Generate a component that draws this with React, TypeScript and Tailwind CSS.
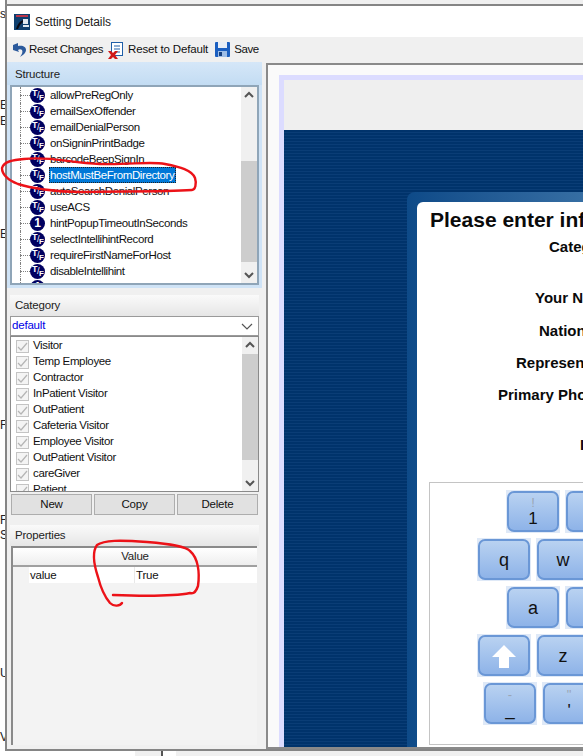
const font = { fontFamily: '"Liberation Sans", Arial, sans-serif' };

const treeRows: { name: string; kind: "bool" | "num"; selected?: boolean }[] = [
  { name: "allowPreRegOnly", kind: "bool" },
  { name: "emailSexOffender", kind: "bool" },
  { name: "emailDenialPerson", kind: "bool" },
  { name: "onSigninPrintBadge", kind: "bool" },
  { name: "barcodeBeepSignIn", kind: "bool" },
  { name: "hostMustBeFromDirectory", kind: "bool", selected: true },
  { name: "autoSearchDenialPerson", kind: "bool" },
  { name: "useACS", kind: "bool" },
  { name: "hintPopupTimeoutInSeconds", kind: "num" },
  { name: "selectIntellihintRecord", kind: "bool" },
  { name: "requireFirstNameForHost", kind: "bool" },
  { name: "disableIntellihint", kind: "bool" },
  { name: "useHintRecord", kind: "num" },
];

const categories = [
  "Visitor",
  "Temp Employee",
  "Contractor",
  "InPatient Visitor",
  "OutPatient",
  "Cafeteria Visitor",
  "Employee Visitor",
  "OutPatient Visitor",
  "careGiver",
  "Patient",
];

function NodeIcon({ kind }: { kind: "bool" | "num" }) {
  return (
    <span className="relative block h-[15px] w-[15px] shrink-0 rounded-full bg-[#000060] tracking-normal text-white">
      {kind === "bool" ? (
        <>
          <span className="absolute left-[2px] top-[0px] text-[9px] font-bold leading-[10px]">T</span>
          <span className="absolute left-[7px] top-[2px] text-[9px] leading-[10px]">/</span>
          <span className="absolute left-[9px] top-[5px] text-[8px] font-bold leading-[10px]">F</span>
        </>
      ) : (
        <span className="absolute inset-0 text-center text-[12px] font-bold leading-[15px]">1</span>
      )}
    </span>
  );
}

function TreeRow({ name, kind, selected }: { name: string; kind: "bool" | "num"; selected?: boolean }) {
  return (
    <div className="relative flex h-4 shrink-0 items-center pl-[8px]">
      <span className="absolute bottom-0 left-[8px] top-0 border-l border-dotted border-[#808080]" />
      <span className="w-[10px] shrink-0 border-t border-dotted border-[#808080]" />
      <NodeIcon kind={kind} />
      <span
        className={
          selected
            ? "ml-[4px] whitespace-nowrap border border-dotted border-[#222] bg-[#0078d7] pr-[1px] text-[11.5px] leading-[14px] tracking-[-0.4px] text-white"
            : "ml-[5px] whitespace-nowrap text-[11.5px] leading-[14px] tracking-[-0.4px] text-[#111]"
        }
      >
        {name}
      </span>
    </div>
  );
}

function ScrollBar({ thumbTop, thumbHeight }: { thumbTop: string; thumbHeight: string }) {
  return (
    <div className="flex w-[16px] shrink-0 flex-col items-center bg-[#f0f0f0]">
      <svg width="16" height="16" viewBox="0 0 16 16" className="shrink-0">
        <path d="M4 10 L8 6 L12 10" fill="none" stroke="#555" strokeWidth="2" />
      </svg>
      <div className={`w-full flex-1 ${thumbTop}`}>
        <div className={`w-full bg-[#cdcdcd] ${thumbHeight}`} />
      </div>
      <svg width="16" height="16" viewBox="0 0 16 16" className="shrink-0">
        <path d="M4 6 L8 10 L12 6" fill="none" stroke="#555" strokeWidth="2" />
      </svg>
    </div>
  );
}

function Key({ top, label, wide }: { top?: string; label?: string; wide?: boolean }) {
  return (
    <div className="h-[43px] w-[54px] shrink-0 bg-[#dfe9f7] p-px">
      <div className="relative flex h-full w-full flex-col items-center justify-center rounded-[7px] border-2 border-[#6a97d6] bg-gradient-to-b from-[#b9d2f1] to-[#8eb3e8] text-[#111]">
        {wide ? (
          <svg width="24" height="24" viewBox="0 0 24 24">
            <path d="M12 1 L24 13 H17 V24 H7 V13 H0 Z" fill="#fff" />
          </svg>
        ) : top !== undefined ? (
          <>
            <span className="text-[13px] leading-[15px] text-[#9aa6b5]">{top}</span>
            <span className="text-[17px] leading-[18px]">{label}</span>
          </>
        ) : (
          <span className="text-[18px] leading-[18px]">{label}</span>
        )}
      </div>
    </div>
  );
}

function PanelHeader({ title, blue }: { title: string; blue?: boolean }) {
  return (
    <div
      className={
        blue
          ? "flex h-[23px] shrink-0 items-center bg-gradient-to-b from-[#d5e7f8] to-[#c3dcf3] pl-[8px] pt-[2px] text-[11.5px] tracking-[-0.2px] text-[#222]"
          : "flex h-[21px] shrink-0 items-center bg-gradient-to-b from-[#fafafa] to-[#e6e6e6] pl-[5px] text-[11.5px] tracking-[-0.2px] text-[#222]"
      }
    >
      {title}
    </div>
  );
}

export default function App() {
  return (
    <div style={font} className="flex h-[756px] w-[583px] flex-col overflow-hidden bg-white">
      <div className="flex h-[751px] shrink-0">
        {/* what shows of the window behind */}
        <div className="flex w-[5px] shrink-0 flex-col overflow-hidden whitespace-nowrap text-[12px] leading-[14px] text-[#222]">
          <span className="mt-[7px]">s</span>
          <span className="mt-[77px]">E</span>
          <span className="mt-[2px]">E</span>
          <span className="mt-[99px]">E</span>
          <span className="mt-[177px]">F</span>
          <span className="mt-[81px]">F</span>
          <span className="mt-[1px]">S</span>
          <span className="mt-[124px]">U</span>
          <span className="mt-[50px]">V</span>
        </div>

        <div className="flex min-w-0 flex-1 flex-col border-b-2 border-l-2 border-[#858585] bg-[#f0f0f0]">
          <div className="mt-[4px] h-[2px] shrink-0 bg-[#858585]" />
          {/* title bar */}
          <div className="flex h-[31px] shrink-0 items-center gap-[5px] bg-white pl-[7px]">
            <svg width="16" height="16" viewBox="0 0 16 16" className="shrink-0">
              <rect width="16" height="16" fill="#0f3f6e" />
              <rect x="2" y="1" width="12" height="2" fill="#b8344a" />
              <rect x="9" y="5" width="5" height="5" fill="#dfe7ef" />
              <path d="M2 15 Q4 8 9 6 L9 8 Q6 10 4 15 Z" fill="#0a0a14" />
              <rect x="9" y="11" width="6" height="2" fill="#dfe7ef" />
            </svg>
            <span className="text-[12px] tracking-[-0.1px] text-[#222]">Setting Details</span>
          </div>

          {/* toolbar */}
          <div className="flex h-[25px] shrink-0 items-center pl-[5px] text-[11.5px] tracking-[-0.4px] text-[#111]">
            <svg width="15" height="15" viewBox="0 0 15 15" className="shrink-0">
              <path d="M1 3 L6 1 L6 4 C11 3 14 5 14 8 C14 11 11 13 8 15 C10 12 11 10 10 8 C9 7 7 7 6 8 L7 10 L1 8 Z" fill="#2c5a9c" />
            </svg>
            <span className="ml-[2px]">Reset Changes</span>
            <svg width="16" height="18" viewBox="0 0 16 18" className="ml-[5px] shrink-0">
              <rect x="3.5" y="1.5" width="11" height="13" fill="#fff" stroke="#1f5fa8" />
              <path d="M6 5 H12 M6 8 H12 M8 11 H12" stroke="#1f5fa8" />
              <path d="M0 10 L3 10 L5 12 L7 10 L10 10 L7 14 L10 18 L7 18 L5 16 L3 18 L0 18 L3 14 Z" fill="#d01818" />
            </svg>
            <span className="ml-[4px] tracking-[-0.15px]">Reset to Default</span>
            <svg width="15" height="15" viewBox="0 0 15 15" className="ml-[7px] shrink-0">
              <rect width="15" height="15" rx="1" fill="#1b5fc0" />
              <rect x="3" y="0" width="9" height="6" fill="#e8eef6" />
              <rect x="3" y="9" width="9" height="6" fill="#9dbde6" />
              <rect x="4" y="10" width="3" height="4" fill="#153f80" />
            </svg>
            <span className="ml-[4px]">Save</span>
          </div>

          {/* body */}
          <div className="flex min-h-0 flex-1">
            <div className="flex w-[255px] shrink-0 flex-col">
              <div className="flex flex-col bg-[#cfe3f6]">
                <PanelHeader title="Structure" blue />
                <div className="mx-[3px] mb-[3px] flex h-[200px] shrink-0 border-2 border-[#8fa5b8] bg-white">
                  <div className="flex min-w-0 flex-1 flex-col overflow-hidden">
                    {treeRows.map((row) => (
                      <TreeRow key={row.name} {...row} />
                    ))}
                  </div>
                  <ScrollBar thumbTop="pt-[58px]" thumbHeight="h-[101px]" />
                </div>
              </div>

              <div className="mt-[7px] px-[3px]">
                <PanelHeader title="Category" />
                <div className="flex h-[20px] items-center justify-between border border-[#9a9a9a] bg-white pl-px pr-[4px] text-[11.5px] tracking-[-0.2px] text-[#0000e6]">
                  <span>default</span>
                  <svg width="14" height="10" viewBox="0 0 14 10">
                    <path d="M2 3 L7 8 L12 3" fill="none" stroke="#555" strokeWidth="1.2" />
                  </svg>
                </div>
                <div className="flex h-[156px] border border-[#8a8a8a] bg-white">
                  <div className="flex min-w-0 flex-1 flex-col overflow-hidden pl-[5px] pt-px">
                    {categories.map((name) => (
                      <div key={name} className="flex h-4 shrink-0 items-center gap-[4px] text-[11.5px] tracking-[-0.35px] text-[#111]">
                        <span className="flex h-[13px] w-[13px] shrink-0 items-center justify-center border border-[#c4c4c4] bg-[#f4f4f4]">
                          <svg width="11" height="11" viewBox="0 0 11 11">
                            <path d="M1 6 L4 9 L10 2" fill="none" stroke="#b5b5b5" strokeWidth="1.2" />
                          </svg>
                        </span>
                        {name}
                      </div>
                    ))}
                  </div>
                  <ScrollBar thumbTop="pt-[1px]" thumbHeight="h-[106px]" />
                </div>
                <div className="mt-[2px] flex gap-[2px] pl-px">
                  {["New", "Copy", "Delete"].map((label) => (
                    <button
                      key={label}
                      type="button"
                      className="h-[21px] w-[81px] border border-[#adadad] bg-[#e1e1e1] text-[11.5px] tracking-[-0.2px] text-[#111]"
                    >
                      {label}
                    </button>
                  ))}
                </div>
              </div>

              <div className="mt-[10px] flex min-h-0 flex-1 flex-col px-[3px]">
                <PanelHeader title="Properties" />
                <div className="mb-[4px] ml-px mr-[2px] flex min-h-0 flex-1 flex-col border-l-2 border-t-2 border-[#8a8a8a] bg-[#f3f3f3]">
                  <div className="flex h-[19px] shrink-0 items-center justify-center border-b-2 border-[#a0a0a0] bg-gradient-to-b from-white to-[#eeeeee] text-[11.5px] tracking-[-0.2px] text-[#222]">
                    Value
                  </div>
                  <div className="flex h-[16px] shrink-0 text-[11.5px] tracking-[-0.2px] text-[#111]">
                    <div className="w-[16px] shrink-0 bg-[#f3f3f3]" />
                    <div className="w-[105px] shrink-0 bg-white pl-[1px] leading-[16px]">value</div>
                    <div className="min-w-0 flex-1 border-l border-[#e8e8e8] bg-white pl-px leading-[16px]">True</div>
                  </div>
                </div>
              </div>
            </div>

            {/* preview */}
            <div className="ml-[4px] mt-px flex min-w-0 flex-1 flex-col border-b-2 border-l-2 border-t-2 border-[#8a8a8a] bg-[#fafafa] pl-[11px] pt-[10px]">
              <div className="flex min-h-0 flex-1 flex-col border-l-[5px] border-t-[5px] border-[#dcdcff]">
                <div className="h-[50px] shrink-0 bg-[#efefef]" />
                <div className="flex min-h-0 flex-1 flex-col bg-[repeating-linear-gradient(180deg,#00336b_0px,#00336b_2px,#0a3d76_2px,#0a3d76_3px)] pl-[123px] pt-[62px]">
                  <div className="flex min-h-0 flex-1 flex-col rounded-tl-[8px] bg-gradient-to-r from-[#0d4a88] to-[#366ea3] pl-[10px] pt-[10px]">
                    <div className="flex min-h-0 flex-1 flex-col overflow-hidden rounded-tl-[6px] bg-white pl-[13px] text-[#0a0a0a]">
                      <div className="mt-[6px] whitespace-nowrap text-[21px] font-bold leading-[24px]">
                        Please enter information
                      </div>
                      <div className="whitespace-nowrap text-[15px] font-bold leading-[18px]">
                        <div className="mt-[6px] pl-[119px]">Category</div>
                        <div className="mt-[33px] pl-[105px]">Your Name</div>
                        <div className="mt-[15px] pl-[109px]">Nationality</div>
                        <div className="mt-[14px] pl-[86px]">Representing</div>
                        <div className="mt-[14px] pl-[68px]">Primary Phone</div>
                        <div className="mt-[32px] pl-[150px]">ID</div>
                      </div>
                      <div className="-ml-px mt-[28px] flex h-[263px] w-[200px] shrink-0 flex-col gap-[5px] border border-[#c4c4c4] pt-[7px]">
                        <div className="flex gap-[5px] pl-[76px]">
                          <Key top="!" label="1" />
                          <Key top="@" label="2" />
                        </div>
                        <div className="flex gap-[5px] pl-[47px]">
                          <Key label="q" />
                          <Key label="w" />
                        </div>
                        <div className="flex gap-[5px] pl-[76px]">
                          <Key label="a" />
                          <Key label="s" />
                        </div>
                        <div className="flex gap-[5px] pl-[47px]">
                          <Key wide />
                          <Key label="z" />
                        </div>
                        <div className="flex gap-[5px] pl-[53px]">
                          <Key top="-" label="_" />
                          <Key top={'"'} label="'" />
                        </div>
                      </div>
                    </div>
                  </div>
                </div>
              </div>
            </div>
          </div>
        </div>
      </div>

      <div className="flex h-[5px] shrink-0 pl-[135px]">
        <div className="w-[26px] bg-[#f0f0f0]" />
        <div className="w-[2px] bg-[#555]" />
        <div className="ml-[13px] flex-1 bg-[#f0f0f0]" />
      </div>

      {/* red marker scribbles drawn over the screenshot */}
      <svg width="583" height="756" viewBox="0 0 583 756" className="pointer-events-none absolute left-0 top-0" fill="none" stroke="#ec1218" strokeWidth="2.4" strokeLinecap="round" strokeLinejoin="round">
        <path d="M2 168 C4 161 14 160 24 159 C50 156 70 163 100 164 C130 165 150 161 165 164 C180 167 192 170 195 178 C197 184 195 190 192 190 C160 192 120 191 80 192 C55 192 30 188 18 184 C8 180 2 175 2 168 Z" />
        <path d="M122 603 C120 606 114 607 110 603 C104 596 100 585 98 577 C94 565 92 552 97 545 C104 540 120 540 147 542 C170 544 186 546 190 551 C198 558 200 572 198 586 C196 592 193 594 190 593 C170 597 140 596 113 595" />
      </svg>
    </div>
  );
}
